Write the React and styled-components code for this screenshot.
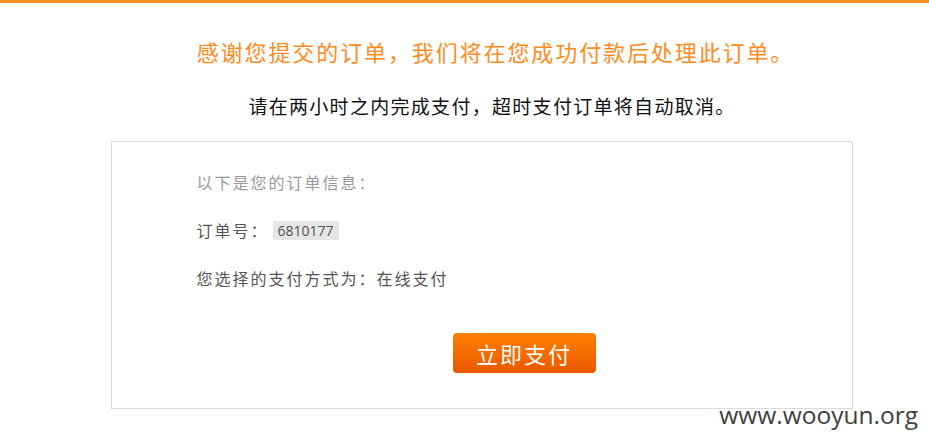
import React from 'react';
import styled, { createGlobalStyle } from 'styled-components';

const GlobalStyle = createGlobalStyle`
  html, body {
    margin: 0;
    padding: 0;
    background: #fff;
    overflow: hidden;
  }
  body {
    font-family: "Noto Sans CJK SC", "Noto Sans", sans-serif;
  }
`;

const TopBar = styled.div`
  height: 3px;
  background: #ff9220;
`;

const Page = styled.div`
  position: relative;
  display: flow-root;
  width: 963px;
  height: 439px;
`;

const Title = styled.h1`
  margin: 33px 0 0 0;
  padding-left: 28px;
  font-size: 22px;
  line-height: 30px;
  font-weight: normal;
  letter-spacing: 1.9px;
  color: #ff8a22;
  text-align: center;
`;

const Notice = styled.p`
  margin: 26px 0 0 0;
  padding-left: 21px;
  font-size: 19px;
  line-height: 28px;
  letter-spacing: 1.3px;
  color: #111;
  text-align: center;
`;

const InfoBox = styled.div`
  box-sizing: border-box;
  width: 742px;
  height: 268px;
  margin: 21px auto 0;
  border: 1px solid #dcdcdc;
  padding: 28px 0 0 85px;
  display: flex;
  flex-direction: column;
`;

const Row = styled.div`
  display: flex;
  align-items: center;
  height: 24px;
  margin-bottom: 24px;
  font-size: 16px;
  letter-spacing: 2px;
  color: ${(props) => (props.muted ? '#999' : '#555')};
`;

const OrderNo = styled.span`
  margin-left: 4px;
  padding: 0 5px;
  height: 19px;
  line-height: 19px;
  background: #e6e6e6;
  font-family: "Open Sans", "Noto Sans", sans-serif;
  font-size: 14px;
  letter-spacing: 0;
  color: #555;
`;

const Actions = styled.div`
  display: flex;
  justify-content: center;
  margin-top: 19px;
`;

const PayButton = styled.button`
  width: 143px;
  height: 40px;
  border: none;
  border-radius: 4px;
  background: linear-gradient(#ff8000, #e95800);
  color: #fff;
  font-family: "Noto Sans CJK SC", sans-serif;
  font-size: 22px;
  letter-spacing: 2px;
  cursor: pointer;
`;

const Watermark = styled.div`
  position: absolute;
  right: 45px;
  bottom: 12px;
  font-family: "Open Sans", "DejaVu Sans", sans-serif;
  font-size: 24.5px;
  line-height: 31px;
  color: #404040;
`;

export default function App() {
  return (
    <>
      <GlobalStyle />
      <TopBar />
      <Page>
        <Title>感谢您提交的订单，我们将在您成功付款后处理此订单。</Title>
        <Notice>请在两小时之内完成支付，超时支付订单将自动取消。</Notice>
        <InfoBox>
          <Row muted>以下是您的订单信息：</Row>
          <Row>
            订单号：<OrderNo>6810177</OrderNo>
          </Row>
          <Row>您选择的支付方式为：在线支付</Row>
          <Actions>
            <PayButton>立即支付</PayButton>
          </Actions>
        </InfoBox>
        <Watermark>www.wooyun.org</Watermark>
      </Page>
    </>
  );
}
